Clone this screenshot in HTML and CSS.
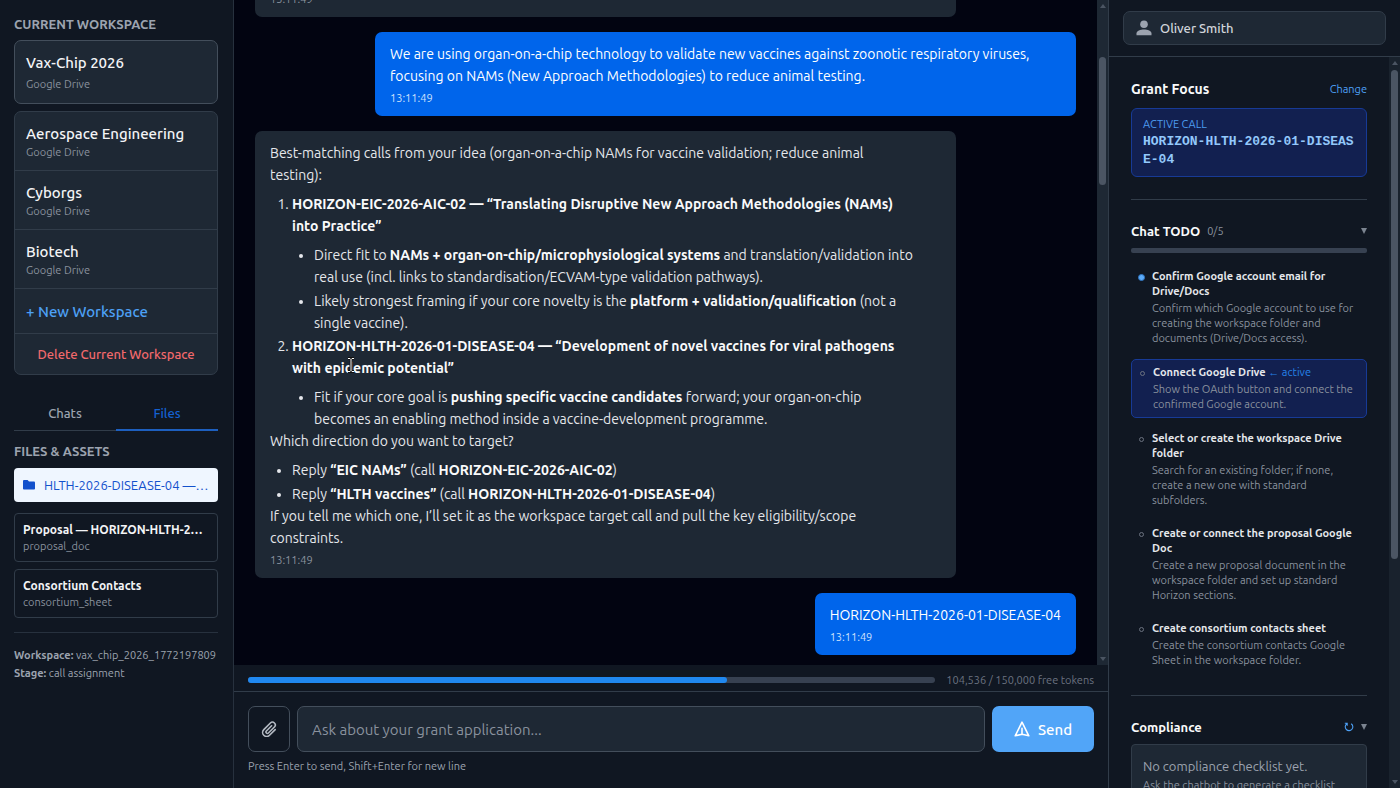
FILE: index.html
```html
<!DOCTYPE html>
<html lang="en">
<head>
  <meta charset="UTF-8" />
  <meta name="viewport" content="width=device-width, initial-scale=1.0"/>
  <title>Vax-Chip 2026</title>
  <link rel="stylesheet" href="styles.css">
</head>
<body>
  <div class="app">
    <aside class="sidebar">
      <h2 class="label">CURRENT WORKSPACE</h2>
      <button class="workspace current" type="button">
        <span class="ws-name">Vax-Chip 2026</span>
        <span class="ws-source">Google Drive</span>
      </button>
      <div class="workspace-list">
        <button class="workspace" type="button">
          <span class="ws-name">Aerospace Engineering</span>
          <span class="ws-source">Google Drive</span>
        </button>
        <button class="workspace" type="button">
          <span class="ws-name">Cyborgs</span>
          <span class="ws-source">Google Drive</span>
        </button>
        <button class="workspace" type="button">
          <span class="ws-name">Biotech</span>
          <span class="ws-source">Google Drive</span>
        </button>
        <button class="ws-new" type="button">+ New Workspace</button>
        <button class="ws-delete" type="button">Delete Current Workspace</button>
      </div>

      <nav class="tabs">
        <button class="tab" type="button">Chats</button>
        <button class="tab active" type="button">Files</button>
      </nav>

      <h2 class="label">FILES &amp; ASSETS</h2>
      <a class="folder" href="#">
        <svg width="12" height="10" viewBox="0 0 12 10"><path d="M0 1.2C0 .5.5 0 1.2 0H4.6l1.4 1.6h4.8c.7 0 1.2.5 1.2 1.2v5.6c0 .7-.5 1.2-1.2 1.2H1.2C.5 9.6 0 9.1 0 8.4z" fill="currentColor"/></svg>
        <span>HLTH-2026-DISEASE-04 — Proposal</span>
      </a>
      <a class="file" href="#">
        <span class="file-name">Proposal — HORIZON-HLTH-2026-01-DISEASE-04</span>
        <span class="file-type">proposal_doc</span>
      </a>
      <a class="file" href="#">
        <span class="file-name">Consortium Contacts</span>
        <span class="file-type">consortium_sheet</span>
      </a>

      <div class="meta">
        <p><strong>Workspace:</strong> vax_chip_2026_1772197809</p>
        <p><strong>Stage:</strong> call assignment</p>
      </div>
    </aside>

    <main class="chat">
      <div class="chat-scroll">
        <div class="messages">
          <div class="message wide">
            <time>13:11:49</time>
          </div>
          <div class="message user wide">
            <p>We are using organ-on-a-chip technology to validate new vaccines against zoonotic respiratory viruses,<br>focusing on NAMs (New Approach Methodologies) to reduce animal testing.</p>
            <time>13:11:49</time>
          </div>
          <div class="message wide">
            <p>Best-matching calls from your idea (organ-on-a-chip NAMs for vaccine validation; reduce animal<br>testing):</p>
            <ol>
              <li><strong>HORIZON-EIC-2026-AIC-02 — “Translating Disruptive New Approach Methodologies (NAMs)<br>into Practice”</strong>
                <ul>
                  <li>Direct fit to <strong>NAMs + organ-on-chip/microphysiological systems</strong> and translation/validation into<br>real use (incl. links to standardisation/ECVAM-type validation pathways).</li>
                  <li>Likely strongest framing if your core novelty is the <strong>platform + validation/qualification</strong> (not a<br>single vaccine).</li>
                </ul>
              </li>
              <li><strong>HORIZON-HLTH-2026-01-DISEASE-04 — “Development of novel vaccines for viral pathogens<br>with epidemic potential”</strong>
                <ul>
                  <li>Fit if your core goal is <strong>pushing specific vaccine candidates</strong> forward; your organ-on-chip<br>becomes an enabling method inside a vaccine-development programme.</li>
                </ul>
              </li>
            </ol>
            <p>Which direction do you want to target?</p>
            <ul>
              <li>Reply <strong>“EIC NAMs”</strong> (call <strong>HORIZON-EIC-2026-AIC-02</strong>)</li>
              <li>Reply <strong>“HLTH vaccines”</strong> (call <strong>HORIZON-HLTH-2026-01-DISEASE-04</strong>)</li>
            </ul>
            <p>If you tell me which one, I’ll set it as the workspace target call and pull the key eligibility/scope<br>constraints.</p>
            <time>13:11:49</time>
          </div>
          <div class="message user">
            <p>HORIZON-HLTH-2026-01-DISEASE-04</p>
            <time>13:11:49</time>
          </div>
        </div>
        <div class="scrollbar chat-bar">
          <i class="arrow up"></i><div class="track"><div class="thumb"></div></div><i class="arrow down"></i>
        </div>
      </div>

      <div class="tokens">
        <div class="token-bar"><div class="token-fill" style="width: 69.7%"></div></div>
        <span>104,536 / 150,000 free tokens</span>
      </div>

      <form class="composer">
        <div class="composer-row">
          <button class="attach" type="button" aria-label="Attach file">
            <svg width="16" height="16" viewBox="0 0 16 16" fill="none" stroke="currentColor" stroke-width="1.6" stroke-linecap="round"><path d="M10.6 4.8 5.4 10a1.4 1.4 0 0 0 2 2l6-6a2.8 2.8 0 0 0-4-4L2.8 8.6a4 4 0 0 0 5.7 5.7l5.7-5.7"/></svg>
          </button>
          <input class="prompt" type="text" aria-label="Message" placeholder="Ask about your grant application...">
          <button class="send" type="submit">
            <svg width="16" height="16" viewBox="0 0 16 16" fill="none" stroke="currentColor" stroke-width="1.6" stroke-linejoin="round" stroke-linecap="round"><path d="M8 1.2 14.8 14.8 8 13.2 1.2 14.8zM8 13.2V7.2"/></svg>
            Send
          </button>
        </div>
        <p class="hint">Press Enter to send, Shift+Enter for new line</p>
      </form>
    </main>

    <aside class="panel">
      <header class="panel-head">
        <button class="user-button" type="button">
          <svg width="16" height="16" viewBox="0 0 16 16" fill="currentColor"><circle cx="8" cy="4.2" r="3.8"/><path d="M.5 15.2v-1.7C.5 10.7 4.5 9.4 8 9.4s7.5 1.3 7.5 4.1v1.7z"/></svg>
          Oliver Smith
        </button>
      </header>
      <div class="panel-scroll">
        <div class="panel-body">
          <section class="block">
            <div class="block-head focus-head">
              <h3>Grant Focus</h3>
              <a class="change" href="#">Change</a>
            </div>
            <div class="call">
              <span class="call-label">ACTIVE CALL</span>
              <span class="call-id">HORIZON-HLTH-2026-01-DISEASE-04</span>
            </div>
          </section>

          <section class="block">
            <div class="block-head">
              <h3>Chat TODO</h3>
              <span class="count">0/5</span>
              <button class="caret" type="button" aria-label="Collapse"><i></i></button>
            </div>
            <div class="todo-bar"></div>
            <ul class="todos">
              <li class="todo">
                <i class="dot on"></i>
                <div><h4>Confirm Google account email for Drive/Docs</h4><p>Confirm which Google account to use for creating the workspace folder and documents (Drive/Docs access).</p></div>
              </li>
              <li class="todo active">
                <i class="dot"></i>
                <div><h4>Connect Google Drive <span>← active</span></h4><p>Show the OAuth button and connect the confirmed Google account.</p></div>
              </li>
              <li class="todo">
                <i class="dot"></i>
                <div><h4>Select or create the workspace Drive folder</h4><p>Search for an existing folder; if none, create a new one with standard subfolders.</p></div>
              </li>
              <li class="todo">
                <i class="dot"></i>
                <div><h4>Create or connect the proposal Google Doc</h4><p>Create a new proposal document in the workspace folder and set up standard Horizon sections.</p></div>
              </li>
              <li class="todo">
                <i class="dot"></i>
                <div><h4>Create consortium contacts sheet</h4><p>Create the consortium contacts Google Sheet in the workspace folder.</p></div>
              </li>
            </ul>
          </section>

          <section class="block">
            <div class="block-head">
              <h3>Compliance</h3>
              <button class="refresh" type="button" aria-label="Refresh">
                <svg width="10" height="10" viewBox="0 0 10 10" fill="none" stroke="currentColor" stroke-width="1.1"><path d="M7.2 1.7a3.8 3.8 0 1 1-4.6.2M.8 1.3h2.4v2.5"/></svg>
              </button>
              <button class="caret" type="button" aria-label="Collapse"><i></i></button>
            </div>
            <div class="empty">
              <p>No compliance checklist yet.</p>
              <small>Ask the chatbot to generate a checklist<br>for the active call.</small>
            </div>
          </section>
        </div>
        <div class="scrollbar panel-bar">
          <i class="arrow up"></i><div class="track"><div class="thumb"></div></div><i class="arrow down"></i>
        </div>
      </div>
    </aside>
  </div>

  <!-- text cursor -->
  <svg class="ibeam" width="8" height="16" viewBox="0 0 8 16" fill="none"><path d="M1 1.5h2l1 1 1-1h2M4 2.5v11M1 14.5h2l1-1 1 1h2" stroke="#111" stroke-width="3"/><path d="M1 1.5h2l1 1 1-1h2M4 2.5v11M1 14.5h2l1-1 1 1h2" stroke="#fff"/></svg>
</body>
</html>
```

FILE: styles.css
```css
* {
  margin: 0;
  padding: 0;
  box-sizing: border-box;
}

body {
  height: 100vh;
  overflow: hidden;
  font-family: Ubuntu, "Noto Sans", sans-serif;
  font-size: 14px;
  color: #e5e7eb;
  background: #020411;
}

button, input {
  font: inherit;
  color: inherit;
  background: none;
  border: 0;
}

button {
  cursor: pointer;
}

a {
  color: inherit;
  text-decoration: none;
}

.app {
  display: flex;
  height: 100%;
}

/* left sidebar */
.sidebar {
  width: 234px;
  flex: none;
  padding: 14px 15px 14px 14px;
  background: #101722;
  border-right: 1px solid #27313e;
}

.label {
  font-size: 13px;
  line-height: 20px;
  font-weight: 600;
  color: #9ca3af;
}

.workspace {
  display: block;
  width: 100%;
  height: 59px;
  padding: 11px;
  text-align: left;
  border-bottom: 1px solid #313c49;
}

.workspace span {
  display: block;
}

.ws-name {
  font-size: 15px;
  line-height: 21px;
  font-weight: 500;
  color: #f3f4f6;
}

.ws-source {
  font-size: 11px;
  line-height: 16px;
  color: #8a929e;
}

.workspace.current {
  height: 64px;
  margin: 6px 0 7px;
  background: #1e2834;
  border: 1px solid #434e5b;
  border-radius: 7px;
}

.current .ws-source {
  margin-top: 3px;
}

.workspace-list {
  background: #1e2834;
  border: 1px solid #313c49;
  border-radius: 7px;
}

.ws-new {
  display: block;
  width: 100%;
  height: 45px;
  padding: 0 11px;
  text-align: left;
  font-size: 15px;
  font-weight: 500;
  color: #4da0f5;
  border-bottom: 1px solid #313c49;
}

.ws-delete {
  display: block;
  width: 100%;
  height: 40px;
  font-size: 13px;
  font-weight: 500;
  color: #f2696c;
}

.tabs {
  display: flex;
  height: 35px;
  margin: 21px 0 10px;
  border-bottom: 1px solid #313c49;
}

.tab {
  flex: 1;
  height: 35px;
  font-size: 13px;
  font-weight: 500;
  color: #9ca3af;
  border-bottom: 2px solid transparent;
}

.tab.active {
  color: #1461d2;
  border-color: #1d5fbf;
}

.folder {
  display: flex;
  align-items: center;
  gap: 9px;
  height: 34px;
  margin: 7px 0 11px;
  padding: 0 9px;
  font-size: 13px;
  color: #1351cc;
  background: #eff6ff;
  border-radius: 4px;
}

.folder svg {
  flex: none;
}

.folder span, .file-name {
  overflow: hidden;
  white-space: nowrap;
  text-overflow: ellipsis;
}

.file {
  display: block;
  height: 49px;
  margin-bottom: 7px;
  padding: 8px;
  border: 1px solid #313c49;
  border-radius: 4px;
}

.file span {
  display: block;
  line-height: 16px;
}

.file-name {
  font-size: 12px;
  font-weight: 600;
  color: #f3f4f6;
}

.file-type {
  font-size: 11px;
  color: #8a929e;
}

.meta {
  margin-top: 14px;
  padding-top: 13px;
  border-top: 1px solid #27313e;
  font-size: 11px;
  line-height: 18px;
  color: #9ca3af;
  white-space: nowrap;
}

.meta strong {
  font-weight: 600;
}

/* chat column */
.chat {
  flex: 1;
  min-width: 0;
  display: flex;
  flex-direction: column;
}

.chat-scroll {
  flex: 1;
  min-height: 0;
  display: flex;
}

.messages {
  flex: 1;
  min-width: 0;
  display: flex;
  flex-direction: column;
  justify-content: flex-end;
  align-items: flex-start;
  gap: 15px;
  padding: 0 21px 10px;
  overflow: hidden;
}

.message {
  flex: none;
  max-width: 701px;
  padding: 11px 15px;
  line-height: 22px;
  background: #1e2834;
  border-radius: 7px;
}

.message.wide {
  width: 100%;
}

.message.user {
  align-self: flex-end;
  color: #fff;
  background: #0065eb;
}

.message strong {
  font-weight: 600;
  color: #f9fafb;
}

.message time {
  display: block;
  margin-top: 4px;
  font-size: 11px;
  line-height: 14px;
  color: #8a929e;
}

.message.user time {
  color: #cfe1fb;
}

.message ul, .message ol {
  margin-top: 7px;
  padding-left: 22px;
}

.message ul {
  list-style: disc;
}

.message ul li + li {
  margin-top: 2px;
}

.message ol > li + li {
  margin-top: 1px;
}

.scrollbar {
  flex: none;
  width: 11px;
  display: flex;
  flex-direction: column;
  align-items: center;
  padding: 4px 0;
  background: #1e2834;
}

.arrow {
  border: 3px solid transparent;
}

.arrow.up {
  border-top: 0;
  border-bottom: 4px solid #4b5563;
}

.arrow.down {
  border-bottom: 0;
  border-top: 4px solid #4b5563;
}

.track {
  flex: 1;
  width: 7px;
}

.thumb {
  background: #4b5563;
  border-radius: 4px;
}

.chat-bar .track {
  padding-top: 49px;
}

.chat-bar .thumb {
  height: 128px;
}

.panel-bar {
  background: #19222d;
}

.panel-bar .track {
  padding-top: 5px;
}

.panel-bar .thumb {
  height: 489px;
}

.tokens {
  display: flex;
  align-items: center;
  gap: 11px;
  height: 27px;
  padding: 3px 14px 0;
  font-size: 11px;
  color: #6b7280;
  background: #101722;
  border-bottom: 1px solid #313c49;
}

.token-bar {
  flex: 1;
  height: 6px;
  background: #374151;
  border-radius: 3px;
}

.token-fill {
  height: 100%;
  background: #2088f0;
  border-radius: 3px;
}

.composer {
  height: 96px;
  padding: 14px;
  background: #101722;
}

.composer-row {
  display: flex;
  gap: 7px;
  height: 46px;
}

.attach {
  display: flex;
  align-items: center;
  justify-content: center;
  width: 42px;
  color: #b4bac3;
  border: 1px solid #434e5b;
  border-radius: 7px;
}

.prompt {
  flex: 1;
  min-width: 0;
  padding: 0 14px;
  font-size: 15px;
  background: #1e2834;
  border: 1px solid #434e5b;
  border-radius: 7px;
}

.prompt::placeholder {
  color: #8a929e;
}

.send {
  display: flex;
  align-items: center;
  justify-content: center;
  gap: 8px;
  width: 102px;
  font-size: 15px;
  font-weight: 500;
  color: #fff;
  background: #51a5f8;
  border-radius: 7px;
}

.hint {
  margin-top: 6px;
  font-size: 11px;
  line-height: 16px;
  color: #9ca3af;
}

/* right panel */
.panel {
  width: 292px;
  flex: none;
  display: flex;
  flex-direction: column;
  background: #101722;
  border-left: 1px solid #313c49;
}

.panel-head {
  padding: 11px 14px;
  border-bottom: 1px solid #313c49;
}

.user-button {
  display: flex;
  align-items: center;
  gap: 8px;
  width: 100%;
  height: 34px;
  padding: 0 12px;
  font-size: 13px;
  font-weight: 500;
  color: #d1d5db;
  background: #1e2834;
  border: 1px solid #313c49;
  border-radius: 7px;
}

.user-button svg {
  color: #9ca3af;
}

.panel-scroll {
  flex: 1;
  min-height: 0;
  display: flex;
}

.panel-body {
  flex: 1;
  min-width: 0;
  padding: 0 22px;
  overflow: hidden;
}

.block {
  padding: 21px 0 22px;
  border-bottom: 1px solid #313c49;
}

.block + .block {
  padding-top: 20px;
}

.block-head {
  display: flex;
  align-items: center;
  gap: 7px;
  height: 22px;
  margin-bottom: 6px;
}

.block-head h3 {
  font-size: 13px;
  font-weight: 600;
  color: #f9fafb;
}

.focus-head {
  margin-bottom: 8px;
}

.focus-head h3 {
  font-size: 14px;
}

.change {
  margin-left: auto;
  font-size: 11px;
  color: #4da0f5;
}

.call {
  padding: 6px 11px 7px;
  background: #122050;
  border: 1px solid #173a96;
  border-radius: 6px;
}

.call span {
  display: block;
}

.call-label {
  font-size: 11px;
  line-height: 18px;
  color: #4d9cf0;
}

.call-id {
  font: bold 13px/18px "Liberation Mono", monospace;
  color: #93c8fb;
  word-break: break-all;
}

.count {
  font-size: 11px;
  color: #8a929e;
}

.caret {
  display: flex;
}

.count + .caret, .refresh {
  margin-left: auto;
}

.caret i {
  border: 3px solid transparent;
  border-bottom: 0;
  border-top: 6px solid #7b8490;
}

.refresh {
  display: flex;
  color: #4da0f5;
}

.todo-bar {
  height: 5px;
  background: #374151;
  border-radius: 2px;
}

.todos {
  display: flex;
  flex-direction: column;
  gap: 8px;
  margin-top: 11px;
  list-style: none;
}

.todo {
  display: flex;
  gap: 7px;
  padding: 5px 7px;
  font-size: 11px;
  line-height: 15px;
}

.todo.active {
  background: #122050;
  border: 1px solid #173a96;
  border-radius: 5px;
}

.dot {
  flex: none;
  width: 5px;
  height: 5px;
  margin: 6px 1px 0;
  border: 1px solid #6b7280;
  border-radius: 50%;
}

.dot.on {
  width: 7px;
  height: 7px;
  margin: 5px 0 0;
  background: #5cabf8;
  border-color: #2f74c0;
}

.todo h4 {
  font-size: 11px;
  font-weight: 600;
  color: #e5e7eb;
}

.todo h4 span {
  font-weight: 400;
  color: #2583e8;
}

.todo p {
  margin-top: 2px;
  color: #8a929e;
}

.empty {
  padding: 11px;
  background: #1e2834;
  border: 1px solid #313c49;
  border-radius: 4px;
}

.empty p {
  font-size: 13px;
  line-height: 20px;
  color: #9ca3af;
}

.empty small {
  display: block;
  font-size: 11px;
  line-height: 18px;
  color: #8a929e;
}

.ibeam {
  position: absolute;
  left: 347px;
  top: 357px;
}
```
